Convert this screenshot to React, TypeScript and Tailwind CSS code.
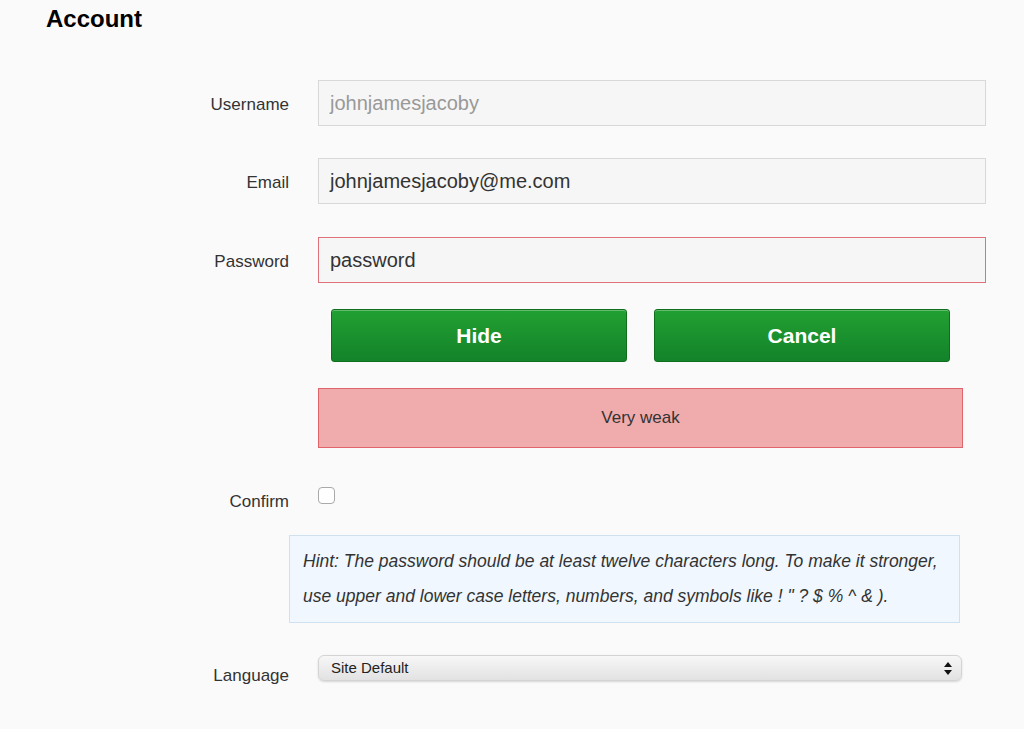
export default function App() {
  const font = { fontFamily: '"Liberation Sans", Arial, Helvetica, sans-serif' }
  return (
    <div className="min-h-[729px] w-full bg-[#fafafa] text-[#333]" style={font}>
      {/* Title */}
      <div className="pl-[46px] pt-[4px]">
        <h1 className="text-[24px] font-bold leading-[29px] text-black">Account</h1>
      </div>

      {/* Username */}
      <div className="mt-[47px] flex items-center">
        <label className="w-[289px] pt-[4px] text-right text-[17px] leading-[20px] text-[#333]">Username</label>
        <div className="ml-[29px] flex h-[46px] w-[668px] items-center border border-[#d8d8d8] bg-[#f6f6f6] px-[11px] text-[20px] text-[#999]">
          johnjamesjacoby
        </div>
      </div>

      {/* Email */}
      <div className="mt-[32px] flex items-center">
        <label className="w-[289px] pt-[4px] text-right text-[17px] leading-[20px] text-[#333]">Email</label>
        <div className="ml-[29px] flex h-[46px] w-[668px] items-center border border-[#d8d8d8] bg-[#f6f6f6] px-[11px] text-[20px] text-[#333]">
          johnjamesjacoby@me.com
        </div>
      </div>

      {/* Password */}
      <div className="mt-[33px] flex items-center">
        <label className="w-[289px] pt-[4px] text-right text-[17px] leading-[20px] text-[#333]">Password</label>
        <div className="ml-[29px] flex h-[46px] w-[668px] items-center border border-[#e0707a] bg-[#f6f6f6] px-[11px] text-[20px] text-[#333]">
          password
        </div>
      </div>

      {/* Buttons */}
      <div className="ml-[331px] mt-[26px] flex gap-[27px]">
        {['Hide', 'Cancel'].map((t) => (
          <button
            key={t}
            className="flex h-[53px] w-[296px] items-center justify-center rounded-[3px] border border-[#0f6e1d] bg-gradient-to-b from-[#22a032] to-[#13832a] text-[21px] font-bold text-white shadow-[inset_0_1px_0_rgba(255,255,255,0.3)]"
          >
            {t}
          </button>
        ))}
      </div>

      {/* Strength meter */}
      <div className="ml-[318px] mt-[26px] flex h-[60px] w-[645px] items-center justify-center border border-[#e0646c] bg-[#f0acad] text-[17px] text-[#333]">
        Very weak
      </div>

      {/* Confirm */}
      <div className="mt-[39px] flex items-start">
        <label className="w-[289px] pt-[5px] text-right text-[17px] leading-[20px] text-[#333]">Confirm</label>
        <div className="ml-[29px] h-[17px] w-[17px] rounded-[4px] border border-[#a9a9a9] bg-white" />
      </div>

      {/* Hint */}
      <div className="ml-[289px] mt-[23px] w-[671px] border border-[#cfe1ee] bg-[#f0f7fe] px-[13px] py-[8px] text-[17.5px] italic leading-[35px] text-[#333]">
        Hint: The password should be at least twelve characters long. To make it stronger,
        <br />
        use upper and lower case letters, numbers, and symbols like ! " ? $ % ^ &amp; ).
      </div>

      {/* Language */}
      <div className="mt-[32px] flex items-start">
        <label className="w-[289px] pt-[11px] text-right text-[17px] leading-[20px] text-[#333]">Language</label>
        <div className="relative ml-[29px] flex h-[26px] w-[644px] items-center rounded-[6px] border border-[#d4d4d4] bg-gradient-to-b from-[#f7f7f7] to-[#e2e2e2] pl-[12px] text-[15px] text-[#222] shadow-[0_1px_2px_rgba(0,0,0,0.15)]">
          Site Default
          <svg className="absolute right-[9px] top-[6px]" width="8" height="13" viewBox="0 0 8 13">
            <path d="M4 0 L8 5 L0 5 Z" fill="#111" />
            <path d="M0 8 L8 8 L4 13 Z" fill="#111" />
          </svg>
        </div>
      </div>
    </div>
  )
}
